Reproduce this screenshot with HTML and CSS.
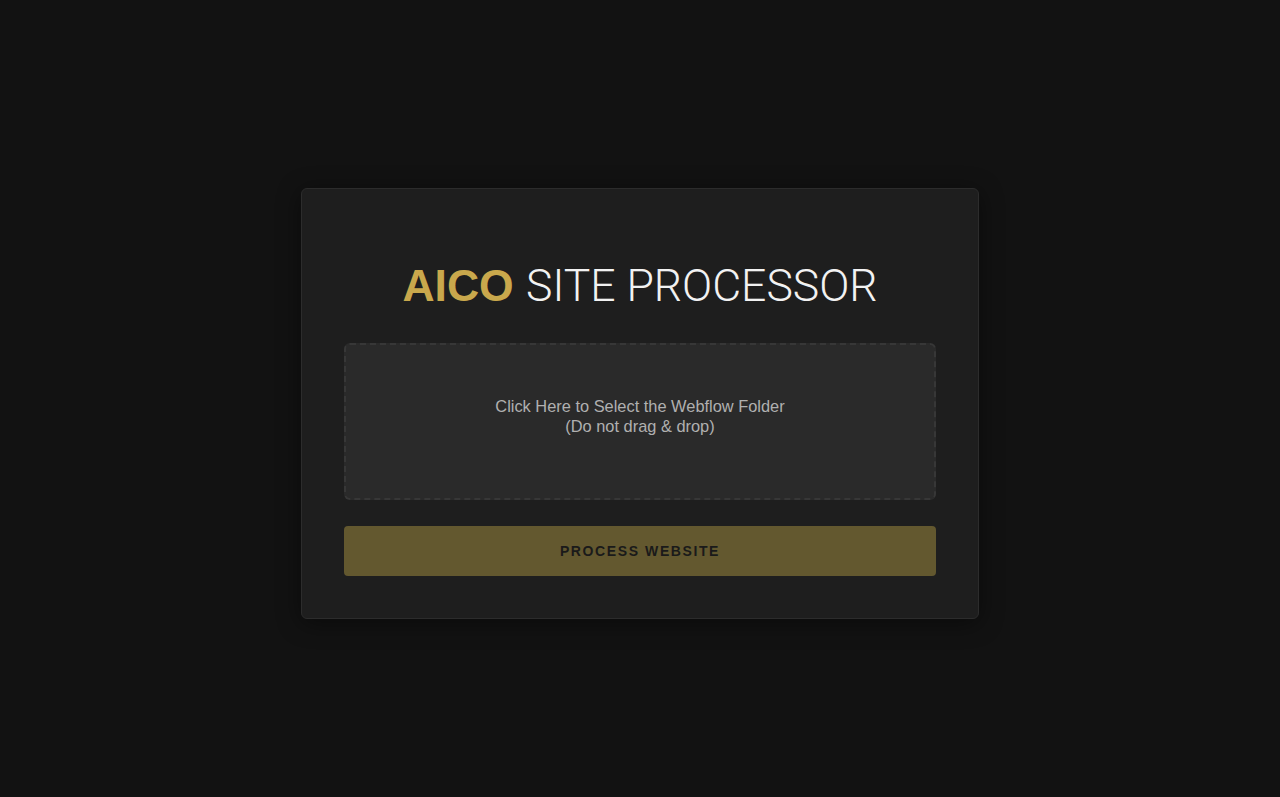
FILE: index.html
```html
<!DOCTYPE html>
<html lang="en">
<head>
    <meta charset="UTF-8">
    <meta name="viewport" content="width=device-width, initial-scale=1.0">
    <title>AICO Site Processor</title>
    <link rel="stylesheet" href="styles.css">
</head>
<body>
    <div class="card">
        <h1><span class="brand">AICO</span> <span class="light">SITE PROCESSOR</span></h1>

        <div class="drop-zone" id="dropZone">
            <p>Click Here to Select the Webflow Folder<br>(Do not drag &amp; drop)</p>
        </div>

        <button class="process-button" id="processButton">Process Website</button>
    </div>
</body>
</html>
```

FILE: styles.css
```css
body {
    margin: 0;
    min-height: 100vh;
    display: flex;
    align-items: center;
    justify-content: center;
    background-color: #121212;
    font-family: "Liberation Sans", Arial, sans-serif;
}
.card {
    width: 592px;
    margin-top: 10px;
    padding: 40px 42px 42px;
    background-color: #1e1e1e;
    border: 1px solid #2c2c2c;
    border-radius: 6px;
    box-shadow: 0 4px 24px rgba(0, 0, 0, 0.45);
}
h1 {
    margin: 31px 0 31px;
    text-align: center;
    font-size: 44.5px;
    font-weight: normal;
    color: #f2f2f2;
}
.brand {
    color: #c9a84c;
    font-weight: bold;
}
.light {
    font-family: Roboto, "Liberation Sans", sans-serif;
    font-weight: 300;
}
.drop-zone {
    box-sizing: border-box;
    height: 157px;
    padding: 51px 20px 0;
    background-color: #2a2a2a;
    border: 2px dashed #373737;
    border-radius: 6px;
    text-align: center;
    cursor: pointer;
}
.drop-zone p {
    margin: 0;
    font-size: 16.4px;
    line-height: 20px;
    color: #b0b0b0;
}
.process-button {
    display: block;
    width: 100%;
    height: 50px;
    margin-top: 26px;
    background-color: #63582f;
    color: #1a1a1a;
    border: none;
    border-radius: 4px;
    font-family: "Liberation Sans", Arial, sans-serif;
    font-size: 14px;
    font-weight: bold;
    letter-spacing: 1.6px;
    text-transform: uppercase;
    cursor: pointer;
}
```
